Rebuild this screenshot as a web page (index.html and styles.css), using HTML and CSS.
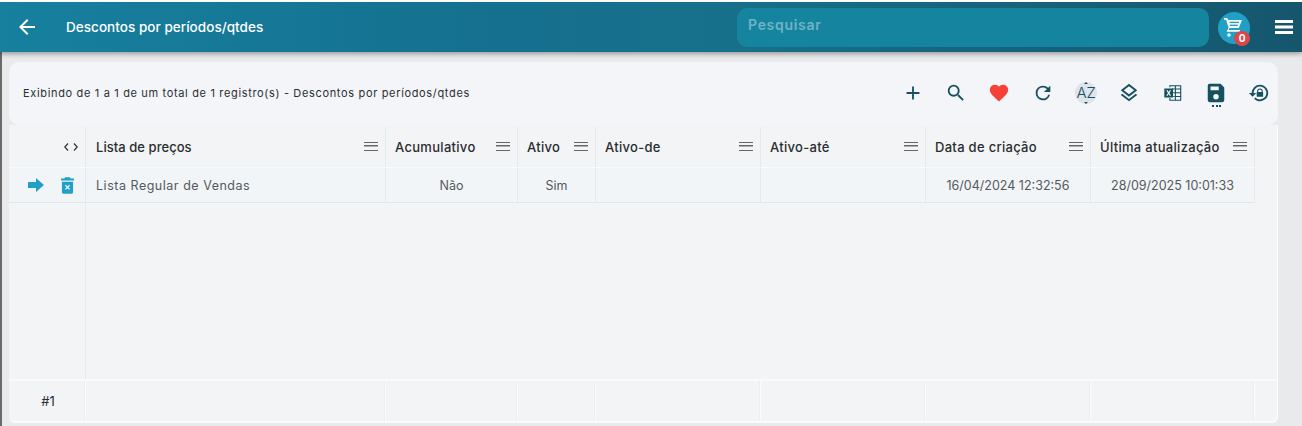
FILE: index.html
```html
<!DOCTYPE html>
<html lang="pt">
<head>
<meta charset="utf-8">
<title>Descontos por períodos/qtdes</title>
<link rel="stylesheet" href="styles.css">
</head>
<body>
<header class="topbar">
  <svg class="back" viewBox="0 0 24 24" width="24" height="24"><path d="M20 11H7.83l5.59-5.59L12 4l-8 8 8 8 1.41-1.41L7.83 13H20z"/></svg>
  <h1 class="title">Descontos por períodos/qtdes</h1>
  <div class="search">Pesquisar</div>
  <div class="cart">
    <svg viewBox="0 0 24 24" width="24" height="24"><path d="M3 3h3.200l1 2H21l-3.200 8H8.600l-1 2H19v1.800H5.600l2-4L5 4.800H3z" fill="#fff"/><rect x="8.500" y="6.700" width="9.500" height="1.400" fill="#21a0c6"/><rect x="8.800" y="9.600" width="8" height="1.400" fill="#21a0c6"/><circle cx="8" cy="20" r="1.800" fill="#fff"/><circle cx="17" cy="20" r="1.800" fill="#fff"/></svg>
    <span class="badge">0</span>
  </div>
  <svg class="menu" viewBox="0 0 18 14" width="18" height="14"><path d="M0 0h18v3H0zM0 5.500h18v3H0zM0 11h18v3H0z"/></svg>
</header>

<main class="content">
  <section class="toolbar">
    <p class="summary">Exibindo de 1 a 1 de um total de 1 registro(s) - Descontos por períodos/qtdes</p>
    <div class="tools">
      <svg class="tool" viewBox="0 0 24 24"><path d="M19 13h-6v6h-2v-6H5v-2h6V5h2v6h6z"/></svg>
      <svg class="tool" viewBox="0 0 24 24"><path d="M15.500 14h-.79l-.28-.27A6.470 6.470 0 0 0 16 9.500 6.500 6.500 0 1 0 9.500 16c1.610 0 3.090-.59 4.230-1.570l.27.28v.79l5 4.990L20.490 19zm-6 0C7.010 14 5 11.990 5 9.500S7.010 5 9.500 5 14 7.010 14 9.500 11.990 14 9.500 14"/></svg>
      <svg class="tool heart" viewBox="0 0 24 24"><path d="M12 21.350l-1.450-1.320C5.400 15.360 2 12.280 2 8.500 2 5.420 4.420 3 7.500 3c1.740 0 3.410.81 4.500 2.090C13.090 3.810 14.760 3 16.500 3 19.580 3 22 5.420 22 8.500c0 3.780-3.400 6.860-8.550 11.540z"/></svg>
      <svg class="tool" viewBox="0 0 24 24"><path d="M17.650 6.350A7.960 7.960 0 0 0 12 4a8 8 0 1 0 7.730 10h-2.080A6 6 0 1 1 12 6c1.660 0 3.140.69 4.220 1.780L13 11h7V4z"/></svg>
      <span class="az"><span class="az-text">AZ</span></span>
      <svg class="tool" viewBox="0 0 24 24"><path d="M11.990 18.540l-7.370-5.730L3 14.070l9 7 9-7-1.630-1.270zM12 16l7.360-5.730L21 9l-9-7-9 7 1.630 1.270zm0-11.470L17.740 9 12 13.470 6.260 9z"/></svg>
      <svg class="tool" viewBox="0 0 24 24"><path d="M8 3.500h13v17H8v-3h1.200v1.800H14v-3.100H9.200v-.9H14v-3H11v-1h3V8.200h-3v-1h3V4.700H9.200v1H8zm7.200 1.200v2.500h4.600V4.700zm0 3.500v3.100h4.600V8.200zm0 4.100v3h4.600v-3zm0 4v3h4.600v-3z"/><path fill-rule="evenodd" d="M2.500 7H12v10H2.500zm2.200 2l1.800 3-1.800 3h1.500l1.100-2 1.100 2h1.500l-1.800-3 1.800-3H8.400l-1.100 2-1.100-2z"/></svg>
      <span class="save">
        <svg class="tool" viewBox="0 0 24 24"><path d="M17 2H5a2 2 0 0 0-2 2v16a2 2 0 0 0 2 2h14a2 2 0 0 0 2-2V6zm-5 17a3 3 0 1 1 0-6 3 3 0 0 1 0 6m3-10H6V5h9z"/></svg>
        <span class="dots"></span>
      </span>
      <svg class="tool" viewBox="0 0 24 24"><path d="M13 3a9 9 0 0 0-9 9H1l4 4 4-4H6a7 7 0 1 1 2.060 4.950l-1.420 1.420A9 9 0 1 0 13 3"/><path fill-rule="evenodd" d="M16 11v-1a3 3 0 0 0-6 0v1H9.500v5h7v-5zm-1.100 0h-3.800v-1a1.900 1.900 0 0 1 3.800 0z"/></svg>
    </div>
  </section>

  <section class="grid">
    <div class="row head">
      <div class="cell c0 code"><svg viewBox="0 0 14 8" width="14" height="8"><path d="M4 .5L.8 4 4 7.500M10 .5L13.200 4 10 7.500"/></svg></div>
      <div class="cell c1"><span class="tight">Lista de preços</span><i class="burger"></i></div>
      <div class="cell c2"><span>Acumulativo</span><i class="burger"></i></div>
      <div class="cell c3"><span>Ativo</span><i class="burger"></i></div>
      <div class="cell c4"><span>Ativo-de</span><i class="burger"></i></div>
      <div class="cell c5"><span>Ativo-até</span><i class="burger"></i></div>
      <div class="cell c6"><span>Data de criação</span><i class="burger"></i></div>
      <div class="cell c7"><span>Última atualização</span><i class="burger"></i></div>
    </div>
    <div class="row data">
      <div class="cell c0 actions">
        <svg viewBox="0 0 16 14" width="16" height="14"><path d="M0 4h8V0l8 7-8 7v-4H0z"/></svg>
        <svg viewBox="0 0 14 18" width="13" height="17"><path fill-rule="evenodd" d="M4.500 0h5l1 1.500H14v2H0v-2h3.500zM1 5h12v11a2 2 0 0 1-2 2H3a2 2 0 0 1-2-2zm3.300 4.300L6 11 4.300 12.700l1 1L7 12l1.700 1.700 1-1L8 11l1.700-1.700-1-1L7 10 5.300 8.300z"/></svg>
      </div>
      <div class="cell c1"><span class="wide">Lista Regular de Vendas</span></div>
      <div class="cell c2 mid">Não</div>
      <div class="cell c3 mid">Sim</div>
      <div class="cell c4"></div>
      <div class="cell c5"></div>
      <div class="cell c6 mid">16/04/2024 12:32:56</div>
      <div class="cell c7 mid">28/09/2025 10:01:33</div>
    </div>
    <div class="filler"><div class="filler-frozen"></div></div>
    <div class="row foot">
      <div class="cell c0 mid">#1</div>
      <div class="cell c1"></div>
      <div class="cell c2"></div>
      <div class="cell c3"></div>
      <div class="cell c4"></div>
      <div class="cell c5"></div>
      <div class="cell c6"></div>
      <div class="cell c7"></div>
      <div class="cell c8"></div>
    </div>
  </section>
</main>
</body>
</html>
```
FILE: styles.css
```css
* { box-sizing: border-box; }
html, body { margin: 0; height: 426px; overflow: hidden; }
body {
  font-family: "Inter", "Open Sans", sans-serif;
  background: #e9eaec;
  border-top: 2px solid #fff;
  display: flex;
  flex-direction: column;
}
.topbar {
  height: 50px;
  flex: none;
  display: flex;
  align-items: center;
  background: linear-gradient(90deg, #17809f 0%, #156f8e 40%, #17708b 55%, #15566d 100%);
  box-shadow: 0 2px 5px rgba(0,0,0,.35);
  color: #fff;
  padding: 0 9px 0 15px;
  position: relative;
}
.back { fill: #fff; flex: none; }
.title {
  margin: 0 0 0 27px;
  font-size: 13.500px;
  font-weight: 500;
  letter-spacing: .04px;
  flex: 1;
  white-space: nowrap;
}
.search {
  width: 472px;
  height: 39px;
  background: #15859f;
  border-radius: 10px;
  color: #6fb3c8;
  font-size: 14px;
  font-weight: 600;
  letter-spacing: .7px;
  padding: 8px 11px;
  margin-right: 9px;
}
.cart {
  width: 32px;
  height: 32px;
  border-radius: 50%;
  background: #21a0c6;
  position: relative;
  display: flex;
  align-items: center;
  justify-content: center;
  padding: 0 3px 1px 0;
  margin-right: 25px;
  margin-top: 1px;
}
.badge {
  position: absolute;
  right: 0;
  bottom: -2px;
  width: 16px;
  height: 15px;
  border-radius: 50%;
  background: #d9474a;
  color: #fff;
  font-size: 10px;
  font-weight: 700;
  line-height: 15px;
  text-align: center;
}
.menu { fill: #fff; flex: none; }
.content {
  flex: 1;
  display: flex;
  flex-direction: column;
  border-left: 2px solid #6a6a6a;
  padding: 10px 24px 3px 7px;
  min-height: 0;
}
.toolbar {
  height: 63px;
  flex: none;
  background: #f3f5f8;
  border-radius: 10px;
  display: flex;
  align-items: center;
  justify-content: space-between;
  padding: 0 8px 2px 14px;
}
.summary {
  margin: 0;
  font-size: 11px;
  letter-spacing: .66px;
  color: #2b2f33;
}
.tools { display: flex; align-items: center; gap: 21.250px; }
.tool { width: 22px; height: 22px; fill: #17505f; display: block; }
.heart { fill: #f44336; margin-left: -1px; margin-right: 1px; }
.az {
  width: 22px;
  height: 22px;
  border-radius: 50%;
  background: #dde4ea;
  display: flex;
  align-items: center;
  justify-content: center;
  position: relative;
}
.az::before, .az::after {
  content: "";
  position: absolute;
  left: 9px;
  border-left: 2px solid transparent;
  border-right: 2px solid transparent;
}
.az::before { top: 0; border-bottom: 2px solid #17505f; }
.az::after { bottom: 0; border-top: 2px solid #17505f; }
.az-text { font-size: 15px; font-weight: 300; color: #17505f; letter-spacing: -.3px; }
.save { position: relative; display: block; }
.dots {
  position: absolute;
  left: 7px;
  bottom: -3px;
  width: 9px;
  height: 2px;
  background: repeating-linear-gradient(90deg, #17505f 0 2px, transparent 2px 3.500px);
}
.grid {
  flex: 1;
  display: flex;
  flex-direction: column;
  background: #f3f4f6;
  border-radius: 0 0 6px 6px;
  border-right: 1px solid #fff;
  border-bottom: 2px solid #fafbfc;
  min-height: 0;
  padding-top: 2px;
}
.row { display: flex; flex: none; }
.head { height: 40px; font-size: 13px; font-weight: 500; letter-spacing: .3px; color: #2a2d30; }
.data { height: 36px; background: #f1f5f8; font-size: 12.500px; color: #55595d; border-top: 1px solid #f8fafb; border-bottom: 1px solid #e2e7eb; align-self: flex-start; }
.foot { height: 42px; font-size: 13px; color: #2b2f33; border-top: 2px solid #fafafb; }
.cell {
  display: flex;
  flex: none;
  align-items: center;
  justify-content: space-between;
  padding: 0 7px 0 9px;
  border-right: 1px solid #e6e9ec;
  white-space: nowrap;
}
.foot .cell { border-right-color: #fafbfc; box-shadow: inset -1px 0 0 #ebedef; }
.c0 { width: 77px; padding: 0 8px; }
.c1 { width: 300px; padding-left: 10px; }
.c2 { width: 132px; }
.c3 { width: 78px; }
.c4, .c5, .c6 { width: 165px; }
.c7 { width: 164px; }
.foot .c8 { flex: 1; border-right: 0; box-shadow: none; }
.mid { justify-content: center; padding: 0 8px; }
.foot .mid { padding-left: 10px; }
.tight { letter-spacing: .05px; }
.wide { letter-spacing: .52px; }
.code { justify-content: flex-end; padding-right: 7px; }
.code svg { fill: none; stroke: #333; stroke-width: 1.200; display: block; margin-top: -1px; }
.burger {
  width: 14px;
  height: 9px;
  flex: none;
  margin-top: -2px;
  border-top: 1.500px solid #666;
  border-bottom: 1.500px solid #666;
  background: linear-gradient(#666, #666) center / 100% 1.500px no-repeat;
}
.actions { justify-content: flex-end; gap: 17px; padding-right: 11px; }
.actions svg { fill: #21a0c6; display: block; }
.filler { flex: 1; min-height: 0; }
.filler-frozen { width: 77px; height: 100%; border-right: 1px solid #e8eaed; }
```
